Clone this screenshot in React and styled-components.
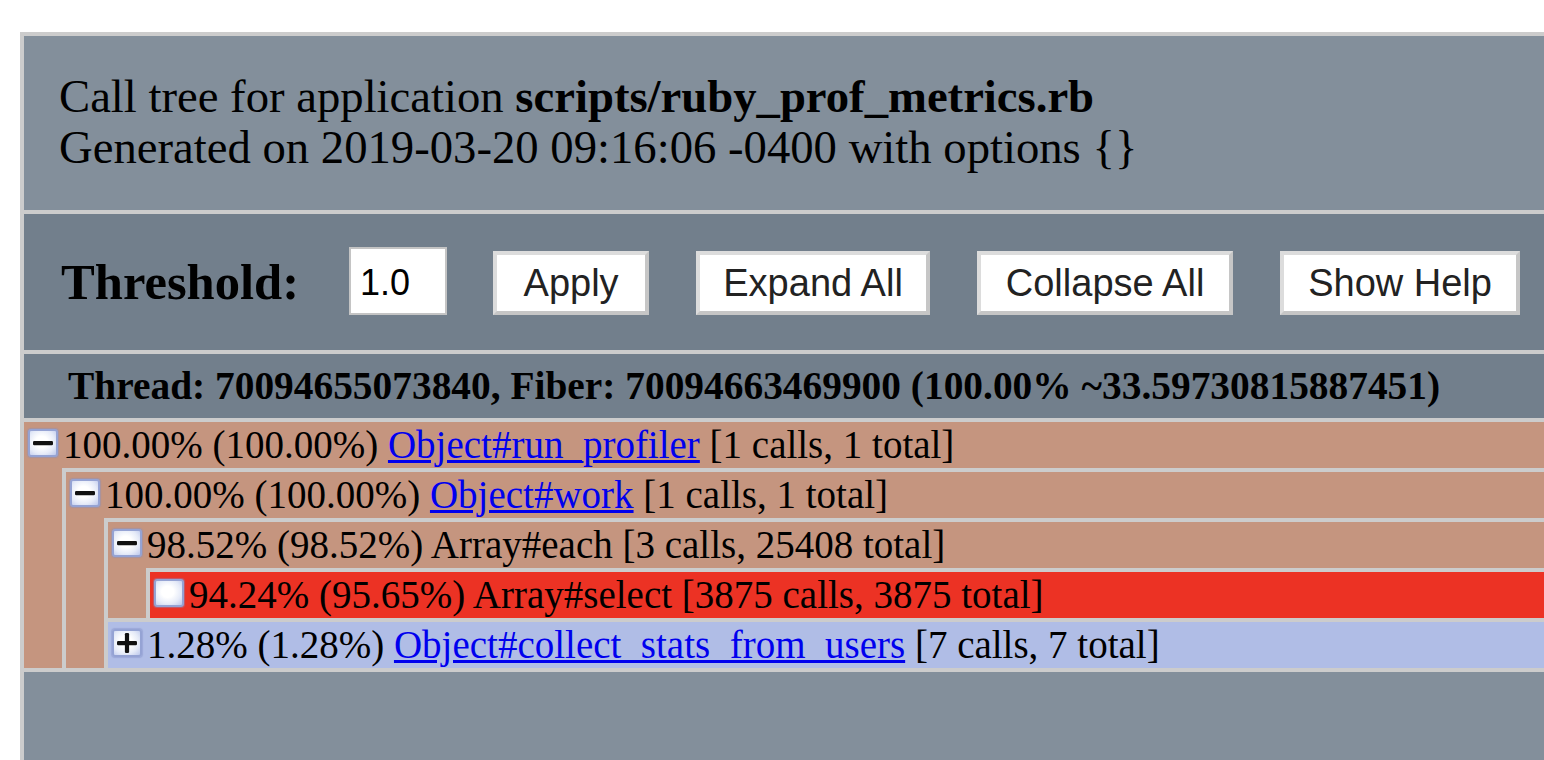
import React from "react";
import styled, { createGlobalStyle } from "styled-components";

const GlobalStyle = createGlobalStyle`
	html, body {
		margin: 0;
		padding: 0;
		background: #fff;
		overflow: hidden;
	}
	body {
		font-family: "Liberation Serif", "Times New Roman", serif;
		color: #000;
	}
`;

const Page = styled.div`
	padding: 32px 0 0 20px;
`;

const Frame = styled.div`
	border-top: 4px solid #ccc;
	border-left: 4px solid #ccc;
	background: #838f9b;
	height: 724px;
	overflow: hidden;
`;

const Header = styled.div`
	padding: 35px 0 37px 35px;
	font-size: 46.7px;
	line-height: 51px;
	b {
		font-weight: bold;
	}
`;

const Toolbar = styled.div`
	display: flex;
	align-items: center;
	gap: 47px;
	height: 136px;
	padding-left: 37px;
	border-top: 4px solid #ccc;
	background: #727f8c;
`;

const Label = styled.span`
	flex: none;
	font-size: 50.6px;
	font-weight: bold;
	margin-right: 3px;
`;

const ThresholdInput = styled.input`
	flex: none;
	box-sizing: border-box;
	width: 98px;
	height: 68px;
	margin: 0 -1px 2px 0;
	padding: 4px 0 0 9px;
	border: 2px solid #c4c4c4;
	background: #fff;
	font-family: "Liberation Sans", Arial, sans-serif;
	font-size: 36px;
	color: #000;
	outline: none;
`;

const Button = styled.button`
	flex: none;
	box-sizing: border-box;
	width: ${(p) => p.$w}px;
	height: 64px;
	margin-top: 2px;
	padding: 0;
	border: 4px solid;
	border-color: #dcdcdc #c6c6c6 #c6c6c6 #dcdcdc;
	background: #fff;
	font-family: "Liberation Sans", Arial, sans-serif;
	font-size: 38px;
	color: #222;
	cursor: pointer;
`;

const ThreadBar = styled.div`
	height: 64px;
	line-height: 64px;
	padding-left: 44px;
	border-top: 4px solid #ccc;
	background: #727f8c;
	font-size: 39.4px;
	font-weight: bold;
	white-space: nowrap;
`;

const List = styled.ul`
	margin: 0;
	padding: 0;
	list-style: none;
`;

const Node = styled.li`
	margin-left: ${(p) => (p.$root ? 0 : 38)}px;
	border-top: 4px solid #ccc;
	border-left: ${(p) => (p.$root ? "none" : "4px solid #ccc")};
	background: ${(p) => p.$bg};
	white-space: nowrap;
`;

const Line = styled.div`
	display: flex;
	align-items: center;
	height: 46px;
	font-size: 39px;
	line-height: 46px;
`;

const Toggle = styled.span`
	box-sizing: border-box;
	flex: none;
	display: flex;
	align-items: center;
	justify-content: center;
	width: 30px;
	height: 28px;
	margin: 0 5px 4px 4px;
	border: 2px solid #95a3d4;
	border-radius: 3px;
	background: radial-gradient(
		ellipse at 45% 45%,
		#ffffff 30%,
		#e6ebf8 65%,
		#bcc7ec 100%
	);
	box-shadow: 0 0 1px 1px rgba(130, 145, 200, 0.45);
`;

const Link = styled.a`
	color: #0000ee;
	text-decoration: underline;
`;

const Footer = styled.div`
	border-top: 4px solid #ccc;
	height: 200px;
	background: #838f9b;
`;

const colors = {
	brown: "#c5957f",
	red: "#ec3224",
	blue: "#b0bde6",
};

const tree = {
	pct: "100.00% (100.00%)",
	name: "Object#run_profiler",
	link: true,
	calls: "[1 calls, 1 total]",
	color: "brown",
	open: true,
	children: [
		{
			pct: "100.00% (100.00%)",
			name: "Object#work",
			link: true,
			calls: "[1 calls, 1 total]",
			color: "brown",
			open: true,
			children: [
				{
					pct: "98.52% (98.52%)",
					name: "Array#each",
					calls: "[3 calls, 25408 total]",
					color: "brown",
					open: true,
					children: [
						{
							pct: "94.24% (95.65%)",
							name: "Array#select",
							calls: "[3875 calls, 3875 total]",
							color: "red",
							children: [],
						},
					],
				},
				{
					pct: "1.28% (1.28%)",
					name: "Object#collect_stats_from_users",
					link: true,
					calls: "[7 calls, 7 total]",
					color: "blue",
					open: false,
					children: [{}],
				},
			],
		},
	],
};

const ToggleIcon = ({ kind }) => (
	<Toggle>
		{kind !== "leaf" && (
			<svg width="22" height="22" viewBox="0 0 22 22">
				<rect x="1" y="9" width="20" height="4.2" rx="1.2" fill="#111" />
				{kind === "plus" && (
					<rect x="8.9" y="1" width="4.2" height="20" rx="1.2" fill="#111" />
				)}
			</svg>
		)}
	</Toggle>
);

const TreeNode = ({ node, root }) => {
	const { pct, name, link, calls, color, open, children } = node;
	const kind = children.length === 0 ? "leaf" : open ? "minus" : "plus";
	return (
		<Node $root={root} $bg={colors[color]}>
			<Line>
				<ToggleIcon kind={kind} />
				<span>
					{pct} {link ? <Link href="#">{name}</Link> : name} {calls}
				</span>
			</Line>
			{open && children.length > 0 && (
				<List>
					{children.map((child, i) => (
						<TreeNode key={i} node={child} />
					))}
				</List>
			)}
		</Node>
	);
};

export default function App() {
	return (
		<>
			<GlobalStyle />
			<Page>
				<Frame>
					<Header>
						Call tree for application <b>scripts/ruby_prof_metrics.rb</b>
						<br />
						Generated on 2019-03-20 09:16:06 -0400 with options {"{}"}
					</Header>
					<Toolbar>
						<Label>Threshold:</Label>
						<ThresholdInput defaultValue="1.0" />
						<Button $w={156}>Apply</Button>
						<Button $w={234}>Expand All</Button>
						<Button $w={256}>Collapse All</Button>
						<Button $w={240}>Show Help</Button>
					</Toolbar>
					<ThreadBar>
						Thread: 70094655073840, Fiber: 70094663469900 (100.00% ~33.59730815887451)
					</ThreadBar>
					<List>
						<TreeNode node={tree} root />
					</List>
					<Footer />
				</Frame>
			</Page>
		</>
	);
}
